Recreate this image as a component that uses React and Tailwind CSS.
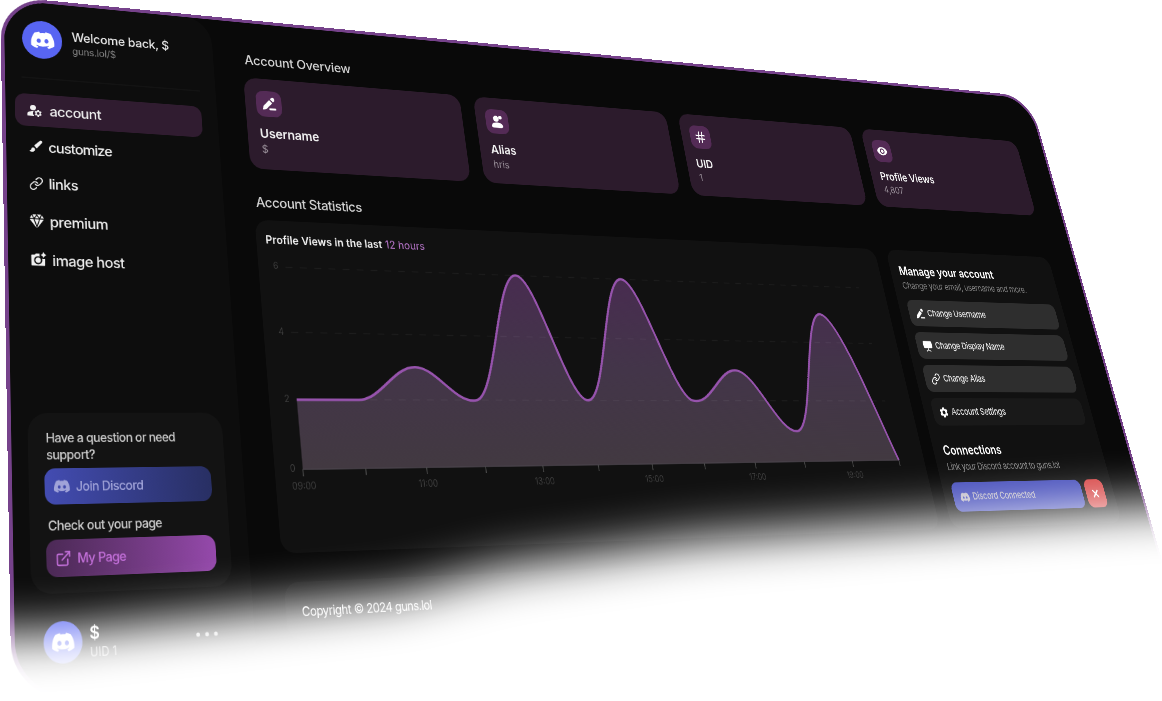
import React from "react";
import { FaDiscord } from "react-icons/fa";
import { MdManageAccounts, MdVisibility, MdSettings } from "react-icons/md";
import { IoDiamond } from "react-icons/io5";
import { RiCameraAiFill } from "react-icons/ri";
import { FiLink, FiExternalLink } from "react-icons/fi";
import { LuHash, LuX } from "react-icons/lu";

function PenIcon({ className }) {
  return (
    <svg viewBox="0 0 24 24" fill="currentColor" className={className}>
      <path d="M3 21.2c-.7.2-1.3-.4-1.1-1.1l1.2-4.2c.1-.5.4-.9.7-1.200l8.900-8.900 4.600 4.600-8.900 8.900c-.3.3-.7.6-1.200.7z" />
      <path d="M14.100 4.400l1.700-1.700c1.200-1.200 3.200-1.200 4.500.1 1.200 1.200 1.200 3.200 0 4.500l-1.600 1.700z" />
      <rect x="12" y="18.600" width="11" height="2.800" rx="1.400" />
    </svg>
  );
}

function BrushIcon({ className }) {
  return (
    <svg viewBox="0 0 24 24" fill="currentColor" className={className}>
      <path d="M22.600 1.400c1 1 1 2.500.1 3.600l-8.200 9.300c-.4.4-.9.5-1.300.1l-3.600-3.600c-.4-.4-.3-1 .1-1.300L19 1.300c1.100-.9 2.600-.9 3.600.1z" />
      <path d="M7.300 13.600c1.700 0 3.200 1.400 3.200 3.200 0 3-2 4.700-4.800 4.700-1.900 0-3.600-.6-4.400-1.700-.3-.4 0-.8.400-.9 1.500-.300 2.400-.9 2.500-2.200.1-1.800 1.400-3.100 3.100-3.100z" />
    </svg>
  );
}

function AliasIcon({ className }) {
  return (
    <svg viewBox="0 0 24 24" fill="currentColor" className={className}>
      <circle cx="10.500" cy="7.500" r="5" />
      <circle cx="18" cy="5" r="3" />
      <path d="M2 19.500c0-4 4-6 9.700-6s9.700 2 9.700 6c0 1.800-1 2.700-2.700 2.700h-14c-1.700 0-2.700-.9-2.700-2.700z" />
    </svg>
  );
}

function BoardIcon({ className }) {
  return (
    <svg viewBox="0 0 24 24" fill="currentColor" className={className}>
      <rect x="1" y="2" width="22" height="14" rx="3" />
      <path d="M11 16h2v3l5 2.500-.8 1.500-5.200-2.500L6.800 23 6 21.500l5-2.500z" />
    </svg>
  );
}

const nav = [
  { label: "account", Icon: MdManageAccounts, active: true, icon: "size-6", text: "pl-[9px] tracking-[-0.600px]" },
  { label: "customize", Icon: BrushIcon, icon: "size-[19px] ml-[3px]", text: "pl-[8px] tracking-[-1px]" },
  { label: "links", Icon: FiLink, icon: "size-5 ml-[2px]", text: "pl-[7px] tracking-[-0.700px]" },
  { label: "premium", Icon: IoDiamond, icon: "size-[21px] ml-px", text: "pl-[7px] tracking-[-0.500px]" },
  { label: "image host", Icon: RiCameraAiFill, icon: "size-[22px] ml-px", text: "pl-[8px] tracking-[-0.600px]" },
];

const stats = [
  { label: "Username", value: "$", Icon: PenIcon },
  { label: "Alias", value: "hris", Icon: AliasIcon },
  { label: "UID", value: "1", Icon: LuHash },
  { label: "Profile Views", value: "4,807", Icon: MdVisibility },
];

const actions = [
  { label: "Change Username", Icon: PenIcon, bg: "bg-[#2e2e2e]" },
  { label: "Change Display Name", Icon: BoardIcon, bg: "bg-[#2e2e2e]" },
  { label: "Change Alias", Icon: FiLink, bg: "bg-[#2e2e2e]" },
  { label: "Account Settings", Icon: MdSettings, bg: "bg-[#191919]" },
];

function Sidebar() {
  return (
    <aside className="flex w-[307px] shrink-0 flex-col rounded-r-[40px] bg-[#0d0d0d] pb-[33px] pt-7">
      <div className="flex items-center gap-[14px] pl-[25px]">
        <div className="flex size-[57px] items-center justify-center rounded-full bg-[#5865f2]">
          <FaDiscord className="size-9 text-white" />
        </div>
        <div className="flex flex-col pt-[3px]">
          <span className="text-[18px] font-medium leading-[24px] tracking-[-0.300px] text-[#ececec]">Welcome back, $</span>
          <span className="text-[14px] leading-[18px] tracking-[-0.200px] text-[#858585]">guns.lol/$</span>
        </div>
      </div>
      <div className="ml-[23px] mt-[29px] h-[2px] w-[260px] bg-[#131313]" />
      <nav className="mt-[23px] flex w-[283px] flex-col gap-[5.700px] pl-[13px]">
        {nav.map(({ label, Icon, active, icon, text }) => (
          <div key={label} className={"flex h-[47px] items-center rounded-[14px] pl-[15px] " + (active ? "bg-[#301c30]" : "")}>
            <Icon className={icon + " shrink-0 text-[#f1f1f1]"} />
            <span className={text + " pt-px text-[20px] font-medium text-[#ececec]"}>{label}</span>
          </div>
        ))}
      </nav>
      <div className="ml-[21px] mt-auto flex w-[261px] flex-col rounded-[26px] bg-[#131313] px-5 pb-[19px] pt-[21px] text-[16px] font-medium leading-[21px] tracking-[-0.600px] text-[#cdcdcd]">
        <p className="pl-[3px]">Have a question or need support?</p>
        <div className="mt-[6px] flex h-11 items-center gap-[7px] rounded-[14px] bg-linear-to-r from-[#434cb2] to-[#282f63] pl-[11px] text-[#a0a3d8]">
          <FaDiscord className="size-[22px]" />
          <span>Join Discord</span>
        </div>
        <p className="mt-[15px] pl-[3px]">Check out your page</p>
        <div className="mt-[6px] flex h-11 items-center gap-[7px] rounded-[14px] bg-linear-to-r from-[#4b2955] to-[#9549ab] pl-[11px] text-[#c26fd8]">
          <FiExternalLink className="size-[21px]" />
          <span>My Page</span>
        </div>
      </div>
      <div className="mt-8 flex items-center pl-[35px]">
        <div className="flex size-12 items-center justify-center rounded-full bg-[#5865f2]">
          <FaDiscord className="size-[30px] text-white" />
        </div>
        <div className="flex flex-col pl-[9px]">
          <span className="text-[20px] font-semibold leading-[26px] text-white">$</span>
          <span className="text-[14px] leading-[18px] text-[#c4c4c4]">UID 1</span>
        </div>
        <svg viewBox="0 0 32 8" className="ml-auto mr-[48px] h-2 w-8" fill="#d0d0d0">
          <circle cx="4.500" cy="4" r="2.500" />
          <circle cx="16.300" cy="4" r="2.500" />
          <circle cx="28" cy="4" r="2.500" />
        </svg>
      </div>
    </aside>
  );
}

const X0 = 40.5;
const STEP = 92.590;
const Y0 = 304;
const UNIT = 46.100;
const values = [2, 2, 3, 2, 6, 2, 6, 2, 3, 1, 5, 0];
// vertical slope of the curve's handles at every hour, in pixels
const slopes = [0, 0, 0, -7, 0, 0, 0, 8, 5, -6, 5, 60];

function linePath() {
  const px = (i) => X0 + i * STEP;
  const py = (i) => Y0 - values[i] * UNIT;
  let d = `M${px(0)} ${py(0)}`;
  for (let i = 1; i < values.length; i++) {
    const last = i === values.length - 1;
    const h = 34;
    d += ` C${px(i - 1) + h} ${py(i - 1) + slopes[i - 1]} ${px(i) - (last ? 20 : h)} ${py(i) - slopes[i]} ${px(i)} ${py(i)}`;
  }
  return d;
}

function Chart() {
  const line = linePath();
  const right = X0 + 11 * STEP;
  return (
    <svg viewBox="0 0 1110 410" className="h-[410px] w-[1110px]">
      <defs>
        <linearGradient id="area" x1="0" y1="0" x2="0" y2="1">
          <stop offset="0" stopColor="#482c50" />
          <stop offset="0.5" stopColor="#433549" />
          <stop offset="1" stopColor="#423941" />
        </linearGradient>
      </defs>
      <path d={`${line} L${X0} ${Y0} Z`} fill="url(#area)" />
      {[2, 4, 6].map((v) => (
        <line key={v} x1={X0} x2={right} y1={Y0 - v * UNIT} y2={Y0 - v * UNIT} stroke="#ffffff" strokeOpacity="0.05" strokeWidth="1.500" strokeDasharray="11 11" />
      ))}
      <line x1={X0} x2={right} y1={Y0} y2={Y0} stroke="#4a434b" strokeWidth="1.500" />
      {values.map((_, i) => (
        <line key={i} x1={X0 + i * STEP} x2={X0 + i * STEP} y1={Y0} y2={Y0 + 9} stroke="#4b4b4b" strokeWidth="1.500" />
      ))}
      <path d={line} fill="none" stroke="#9653ac" strokeWidth="3.600" />
      <g fill="#3e3e3e" fontSize="12.500">
        {[0, 2, 4, 6].map((v) => (
          <text key={v} x="30" y={Y0 - v * UNIT + 3} textAnchor="end">{v}</text>
        ))}
        {["09:00", "11:00", "13:00", "15:00", "17:00", "19:00"].map((t, i) => (
          <text key={t} x={X0 + i * 2 * STEP} y={Y0 + 26} textAnchor="middle">{t}</text>
        ))}
      </g>
    </svg>
  );
}

function Manage() {
  return (
    <section className="flex w-[365px] shrink-0 flex-col rounded-[20px] bg-[#111111] pl-[18px] pr-[18px] pt-[22px]">
      <h3 className="text-[20px] font-semibold leading-7 tracking-[-0.150px] text-white">Manage your account</h3>
      <p className="whitespace-nowrap text-[15px] leading-[22px] tracking-[-0.350px] text-[#7f7f7f]">Change your email, username and more.</p>
      <div className="mt-[13px] flex flex-col gap-[10px]">
        {actions.map(({ label, Icon, bg }) => (
          <div key={label} className={"flex h-11 items-center gap-[6px] rounded-[12px] pl-[13px] pt-px text-white " + bg}>
            <Icon className="size-5" />
            <span className="text-[15px] font-medium tracking-[-0.400px] text-[#e6e6e6]">{label}</span>
          </div>
        ))}
      </div>
      <h3 className="mt-[25px] pl-[2px] text-[20px] font-semibold leading-7 text-white">Connections</h3>
      <p className="mt-px whitespace-nowrap pl-[2px] text-[15px] leading-[22px] tracking-[-0.600px] text-[#8a8a8a]">Link your Discord account to guns.lol</p>
      <div className="mt-[13px] flex h-[45px] gap-2">
        <div className="flex w-[277px] items-center gap-[6px] rounded-[12px] bg-[#4a52bd] pl-[14px] text-[#c4c0cc]">
          <FaDiscord className="size-5" />
          <span className="text-[15px] font-medium tracking-[-0.300px]">Discord Connected</span>
        </div>
        <div className="flex w-[42px] items-center justify-center rounded-[12px] bg-[#d84848]">
          <LuX className="size-[20px] stroke-3 text-white" />
        </div>
      </div>
    </section>
  );
}

function Main() {
  return (
    <main className="flex flex-1 flex-col pl-[45px] pr-[61px] pt-[46px]">
      <h2 className="pl-[4px] text-[20px] font-medium leading-7 tracking-[-0.300px] text-[#d6d6d6]">Account Overview</h2>
      <div className="mt-[14px] grid grid-cols-4 gap-6">
        {stats.map(({ label, value, Icon }) => (
          <div key={label} className="flex h-[140px] flex-col rounded-[20px] bg-[#2c1b2c] pl-[17px] pt-[19px]">
            <div className="flex size-[40px] items-center justify-center rounded-[12px] bg-[#542b56]">
              <Icon className="size-6 text-white" />
            </div>
            <span className="mt-[14px] pl-[2px] text-[19px] font-semibold leading-[26px] tracking-[-0.100px] text-[#f2f2f2]">{label}</span>
            <span className="pl-[3px] text-[16px] leading-[21px] text-[#978d97]">{value}</span>
          </div>
        ))}
      </div>
      <h2 className="mt-9 pl-[4px] text-[20px] font-medium leading-7 tracking-[-0.450px] text-[#d6d6d6]">Account Statistics</h2>
      <div className="mt-3 flex h-[450px] gap-6">
        <section className="flex flex-1 flex-col rounded-[20px] bg-[#111111]">
          <h3 className="flex h-10 items-end gap-[5px] whitespace-pre pl-[14px] text-[16px] font-semibold leading-6 tracking-[0.050px] text-[#f2f2f2]">
            Profile Views in the last
            <span className="font-normal text-[#bd78d0]">12 hours</span>
          </h3>
          <Chart />
        </section>
        <Manage />
      </div>
      <footer className="mt-9 flex h-[70px] items-center rounded-[20px] bg-[#0f0f0f] pl-[22px] pt-px text-[16px] tracking-[-0.550px] text-white">
        Copyright © 2024 guns.lol
      </footer>
    </main>
  );
}

export default function App() {
  return (
    <div className="relative h-[701px] w-[1162px] overflow-hidden bg-white font-['Inter','Liberation_Sans',sans-serif]">
      <div className="flex h-[914px] w-[1922px] origin-top-left overflow-hidden rounded-[67px] border-5 border-[#76428b] bg-[#090909] [transform:matrix3d(0.70803,0.068422,0,0.0001677,0.0105,0.64925,0,-0.000175,0,0,1,0,0.13,-4.12,0,1)]">
        <Sidebar />
        <Main />
      </div>
      <svg viewBox="0 0 1162 701" className="pointer-events-none absolute inset-0 h-[701px] w-[1162px]">
        <defs>
          <filter id="haze" filterUnits="userSpaceOnUse" x="-300" y="300" width="1800" height="700">
            <feGaussianBlur stdDeviation="25" />
          </filter>
        </defs>
        <path d="M-200 640 L60 632 L220 614 L400 594 L500 567 L700 538 L900 522 L1100 507 L1400 490 V1000 H-200 Z" fill="#ffffff" filter="url(#haze)" />
      </svg>
    </div>
  );
}
